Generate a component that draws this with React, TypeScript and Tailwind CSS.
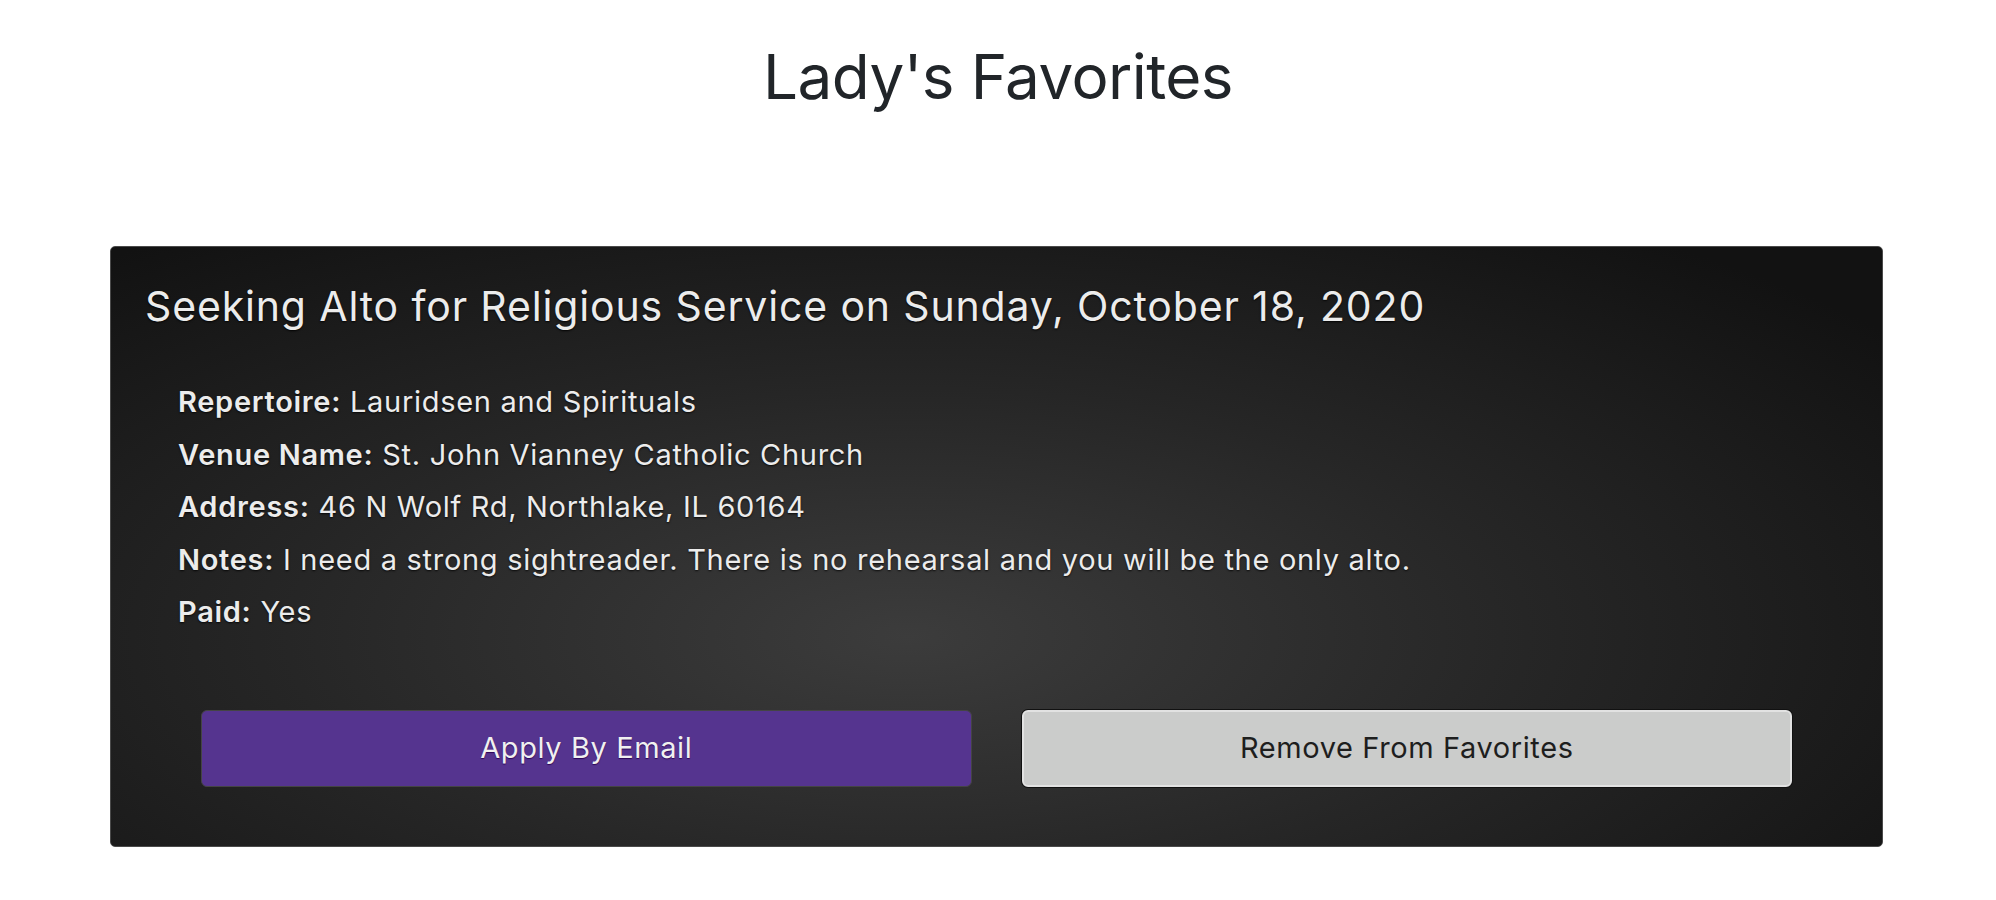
const gig = {
	title: 'Seeking Alto for Religious Service on Sunday, October 18, 2020',
	details: [
		{ label: 'Repertoire:', value: 'Lauridsen and Spirituals' },
		{ label: 'Venue Name:', value: 'St. John Vianney Catholic Church' },
		{ label: 'Address:', value: '46 N Wolf Rd, Northlake, IL 60164' },
		{
			label: 'Notes:',
			value:
				'I need a strong sightreader. There is no rehearsal and you will be the only alto.',
		},
		{ label: 'Paid:', value: 'Yes' },
	],
}

function GigCard() {
	return (
		<div className="rounded-[5px] border border-[#4a4a4a] bg-[radial-gradient(ellipse_at_45%_65%,#3c3c3c_0%,#262626_45%,#121212_90%)] px-[34px] pt-[35px] pb-[59px] text-[#ececec]">
			<h2 className="text-[41px] leading-[48px] font-normal tracking-[0.85px] [text-shadow:0_1px_2px_rgba(0,0,0,0.9)]">
				{gig.title}
			</h2>
			<ul className="mt-[46px] pl-[33px] text-[29px] leading-[52.5px] tracking-[0.7px] [text-shadow:0_1px_2px_rgba(0,0,0,0.8)]">
				{gig.details.map((d) => (
					<li key={d.label}>
						<span className="font-semibold">{d.label}</span> {d.value}
					</li>
				))}
			</ul>
			<div className="mt-[71px] grid grid-cols-2 gap-[50px] px-[56px]">
				<button className="h-[77px] rounded-[6px] border border-[#444] bg-[#55348f] text-[29px] text-[#f0f0f0] tracking-[0.6px] [text-shadow:0_1px_1px_rgba(40,0,80,0.9)]">
					Apply By Email
				</button>
				<button className="h-[77px] rounded-[6px] border-2 border-[#e2e2e2] bg-[#cbcccb] text-[29px] text-[#1e1e1e] tracking-[0.6px] shadow-[0_0_0_1px_#111]">
					Remove From Favorites
				</button>
			</div>
		</div>
	)
}

export default function App() {
	return (
		<div className="min-h-screen bg-white font-['Inter',sans-serif]">
			<h1 className="pt-[38px] text-center text-[62px] leading-[77px] font-normal tracking-[-0.6px] text-[#212529]">
				Lady's Favorites
			</h1>
			<div className="ml-[110px] mr-[113px] mt-[131px]">
				<GigCard />
			</div>
		</div>
	)
}
